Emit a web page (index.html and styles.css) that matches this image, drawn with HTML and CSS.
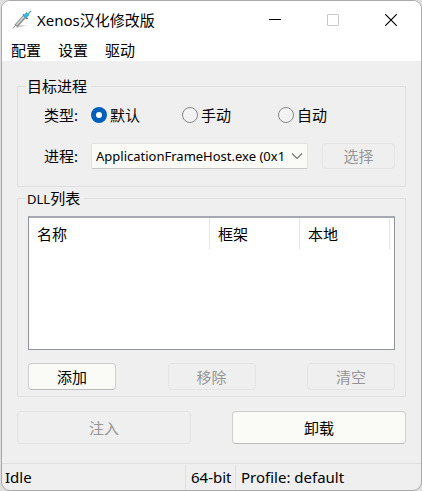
FILE: index.html
```
<!DOCTYPE html>
<html lang="zh-CN">
<head>
    <meta charset="UTF-8">
    <meta name="viewport" content="width=device-width, initial-scale=1.0">
    <title>Xenos汉化修改版</title>
    <link rel="stylesheet" href="styles.css">
</head>
<body>
    <div class="window">
        <header class="title-bar">
            <svg class="app-icon" width="20" height="20" viewBox="0 0 20 20" aria-hidden="true">
                <path d="M3 18.5L15 15.5L8 15Z" fill="#d2d2d2"/>
                <path d="M1 18.5L5 13.5" stroke="#8c8c8c" stroke-width="1"/>
                <path d="M4 16L13 6" stroke="#8a8c8e" stroke-width="4"/>
                <path d="M4.5 15L12.5 6" stroke="#d5d9da" stroke-width="1.5"/>
                <path d="M11 4.5L15.5 9" stroke="#35778b" stroke-width="1.5"/>
                <path d="M12.5 7L16 3.5" stroke="#38b3dc" stroke-width="4"/>
                <path d="M15.5 4.5L19 1" stroke="#6ba3b4" stroke-width="1.5"/>
            </svg>
            <h1 class="title">Xenos汉化修改版</h1>
            <div class="window-controls">
                <button class="control-button" type="button" aria-label="最小化">
                    <svg width="12" height="12" viewBox="0 0 12 12"><path d="M0 5.5H12" stroke="#000"/></svg>
                </button>
                <button class="control-button" type="button" aria-label="最大化" disabled>
                    <svg width="12" height="12" viewBox="0 0 12 12"><rect x="0.5" y="0.5" width="11" height="11" rx="0.5" fill="none" stroke="#c8c8c8"/></svg>
                </button>
                <button class="control-button" type="button" aria-label="关闭">
                    <svg width="12" height="12" viewBox="0 0 12 12"><path d="M0.3 0.3L11.7 11.7M11.7 0.3L0.3 11.7" stroke="#000" stroke-width="1.2"/></svg>
                </button>
            </div>
        </header>

        <nav class="menu-bar">
            <button class="menu-item" type="button">配置</button>
            <button class="menu-item" type="button">设置</button>
            <button class="menu-item" type="button">驱动</button>
        </nav>

        <main class="content">
            <fieldset class="group">
                <legend>目标进程</legend>
                <div class="form-row" role="radiogroup" aria-labelledby="typeLabel">
                    <span class="row-label" id="typeLabel">类型:</span>
                    <div class="radio-list">
                        <label class="radio"><input type="radio" name="type" checked>默认</label>
                        <label class="radio"><input type="radio" name="type">手动</label>
                        <label class="radio"><input type="radio" name="type">自动</label>
                    </div>
                </div>
                <div class="form-row process-row">
                    <label class="row-label" for="process">进程:</label>
                    <div class="select-box">
                        <select id="process">
                            <option>ApplicationFrameHost.exe (0x1</option>
                        </select>
                        <svg class="chevron" width="12" height="8" viewBox="0 0 12 8" aria-hidden="true"><path d="M1 1.5L6 6.5L11 1.5" fill="none" stroke="#777" stroke-width="1.2"/></svg>
                    </div>
                    <button class="button select-button" type="button" disabled>选择</button>
                </div>
            </fieldset>

            <fieldset class="group">
                <legend><span class="latin">DLL</span>列表</legend>
                <div class="list-view">
                    <table class="dll-table">
                        <thead>
                            <tr>
                                <th class="col-name">名称</th>
                                <th class="col-arch">框架</th>
                                <th class="col-arch">本地</th>
                                <td></td>
                            </tr>
                        </thead>
                    </table>
                </div>
                <div class="button-row">
                    <button class="button" type="button">添加</button>
                    <button class="button" type="button" disabled>移除</button>
                    <button class="button" type="button" disabled>清空</button>
                </div>
            </fieldset>

            <div class="actions">
                <button class="button button-large" type="button" disabled>注入</button>
                <button class="button button-large" type="button">卸载</button>
            </div>
        </main>

        <footer class="status-bar">
            <span class="status status-state">Idle</span>
            <span class="status status-arch">64-bit</span>
            <span class="status status-profile">Profile: default</span>
        </footer>
    </div>
</body>
</html>
```

FILE: styles.css
```
* {
    box-sizing: border-box;
}

body {
    margin: 0;
    padding: 0 0 0 1px;
    min-height: 100vh;
    display: flex;
    background: #dedede;
    color: #000;
    font-family: "Noto Sans", "Noto Sans CJK SC", sans-serif;
    font-size: 15px;
    line-height: 16px;
}

button,
select {
    font: inherit;
    color: inherit;
}

.window {
    flex: 1;
    display: flex;
    flex-direction: column;
    background: #efefef;
    border: 1px solid #a9a9a9;
    border-radius: 9px;
    overflow: hidden;
}

/* Title bar and menu */
.title-bar {
    display: flex;
    align-items: center;
    height: 38px;
    padding: 0 1px 0 10px;
    background: #fff;
}

.app-icon {
    flex: none;
}

.title {
    margin: 0;
    padding-left: 5px;
    font-size: 15px;
    font-weight: normal;
    white-space: nowrap;
}

.window-controls {
    display: flex;
    margin-left: auto;
}

.control-button {
    display: flex;
    align-items: center;
    justify-content: center;
    width: 58px;
    height: 38px;
    padding: 0;
    border: none;
    background: none;
}

.menu-bar {
    display: flex;
    gap: 17px;
    height: 22px;
    padding: 0 9px;
    background: #fff;
}

.menu-item {
    height: 22px;
    padding: 0;
    border: none;
    background: none;
}

/* Group boxes */
.content {
    flex: 1;
    padding: 17px 15px 0;
}

.group {
    min-width: 0;
    margin: 0 0 3px;
    padding: 0 10px 6px;
    border: 1px solid #dfdfdf;
}

.group legend {
    height: 16px;
    padding: 0 4px 0 1px;
    margin-left: -2px;
}

.latin {
    font-size: 13px;
}

.form-row {
    display: flex;
    align-items: center;
    height: 26px;
    margin-top: 8px;
}

.row-label {
    width: 50px;
    flex: none;
    text-align: right;
}

.radio-list {
    flex: 1;
    display: grid;
    grid-template-columns: 91px 96px 1fr;
    margin-left: 13px;
}

.radio {
    display: flex;
    align-items: center;
    gap: 3px;
}

.radio input {
    appearance: none;
    flex: none;
    width: 16px;
    height: 16px;
    margin: 0;
    border: 1px solid #858585;
    border-radius: 50%;
    background: #f3f3f3;
}

.radio input:checked {
    border: 5px solid #005fb8;
    background: #fff;
}

.process-row {
    margin: 15px 0 11px;
}

.select-box {
    position: relative;
    flex: 1;
    min-width: 0;
    margin-left: 13px;
}

.select-box select {
    appearance: none;
    display: block;
    width: 100%;
    height: 26px;
    padding: 0 22px 0 4px;
    border: 1px solid #e2e2e2;
    border-bottom-color: #c8c8c8;
    border-radius: 2px;
    background: #fafbf7;
    font-size: 13px;
}

.chevron {
    position: absolute;
    top: 9px;
    right: 5px;
    pointer-events: none;
}

.button {
    width: 88px;
    height: 27px;
    padding: 0;
    border: 1px solid #cfcfcf;
    border-bottom-color: #bcbcbc;
    border-radius: 4px;
    background: #fafbf7;
}

.button:disabled {
    border-color: #e4e4e4;
    background: #efefef;
    color: #969696;
}

.select-button {
    width: 73px;
    height: 26px;
    margin-left: 14px;
}

/* DLL list */
.list-view {
    height: 134px;
    margin-top: 10px;
    border: 1px solid #90949b;
    border-top: 2px solid #a5a8b0;
    background: #fff;
}

.dll-table {
    width: 100%;
    table-layout: fixed;
    border-collapse: separate;
    border-spacing: 0;
}

.dll-table th {
    height: 31px;
    padding: 0 0 0 8px;
    border-right: 1px solid #e5e5e5;
    text-align: left;
    font-weight: normal;
}

.dll-table td {
    width: 4px;
    padding: 0;
}

.dll-table .col-arch {
    width: 90px;
}

.button-row {
    display: flex;
    justify-content: space-between;
    margin-top: 13px;
}

.actions {
    display: flex;
    justify-content: space-between;
    gap: 41px;
    margin-top: 14px;
}

.button-large {
    flex: 1;
    height: 33px;
}

/* Status bar */
.status-bar {
    display: flex;
    height: 27px;
    padding: 1px 0;
    border-top: 1px solid #dfdfdf;
    line-height: 24px;
}

.status {
    padding-left: 5px;
    white-space: nowrap;
}

.status-state {
    width: 184px;
    padding-left: 3px;
    border-right: 1px solid #dfdfdf;
}

.status-arch {
    width: 50px;
    border-right: 1px solid #dfdfdf;
}

.status-profile {
    flex: 1;
}
```
